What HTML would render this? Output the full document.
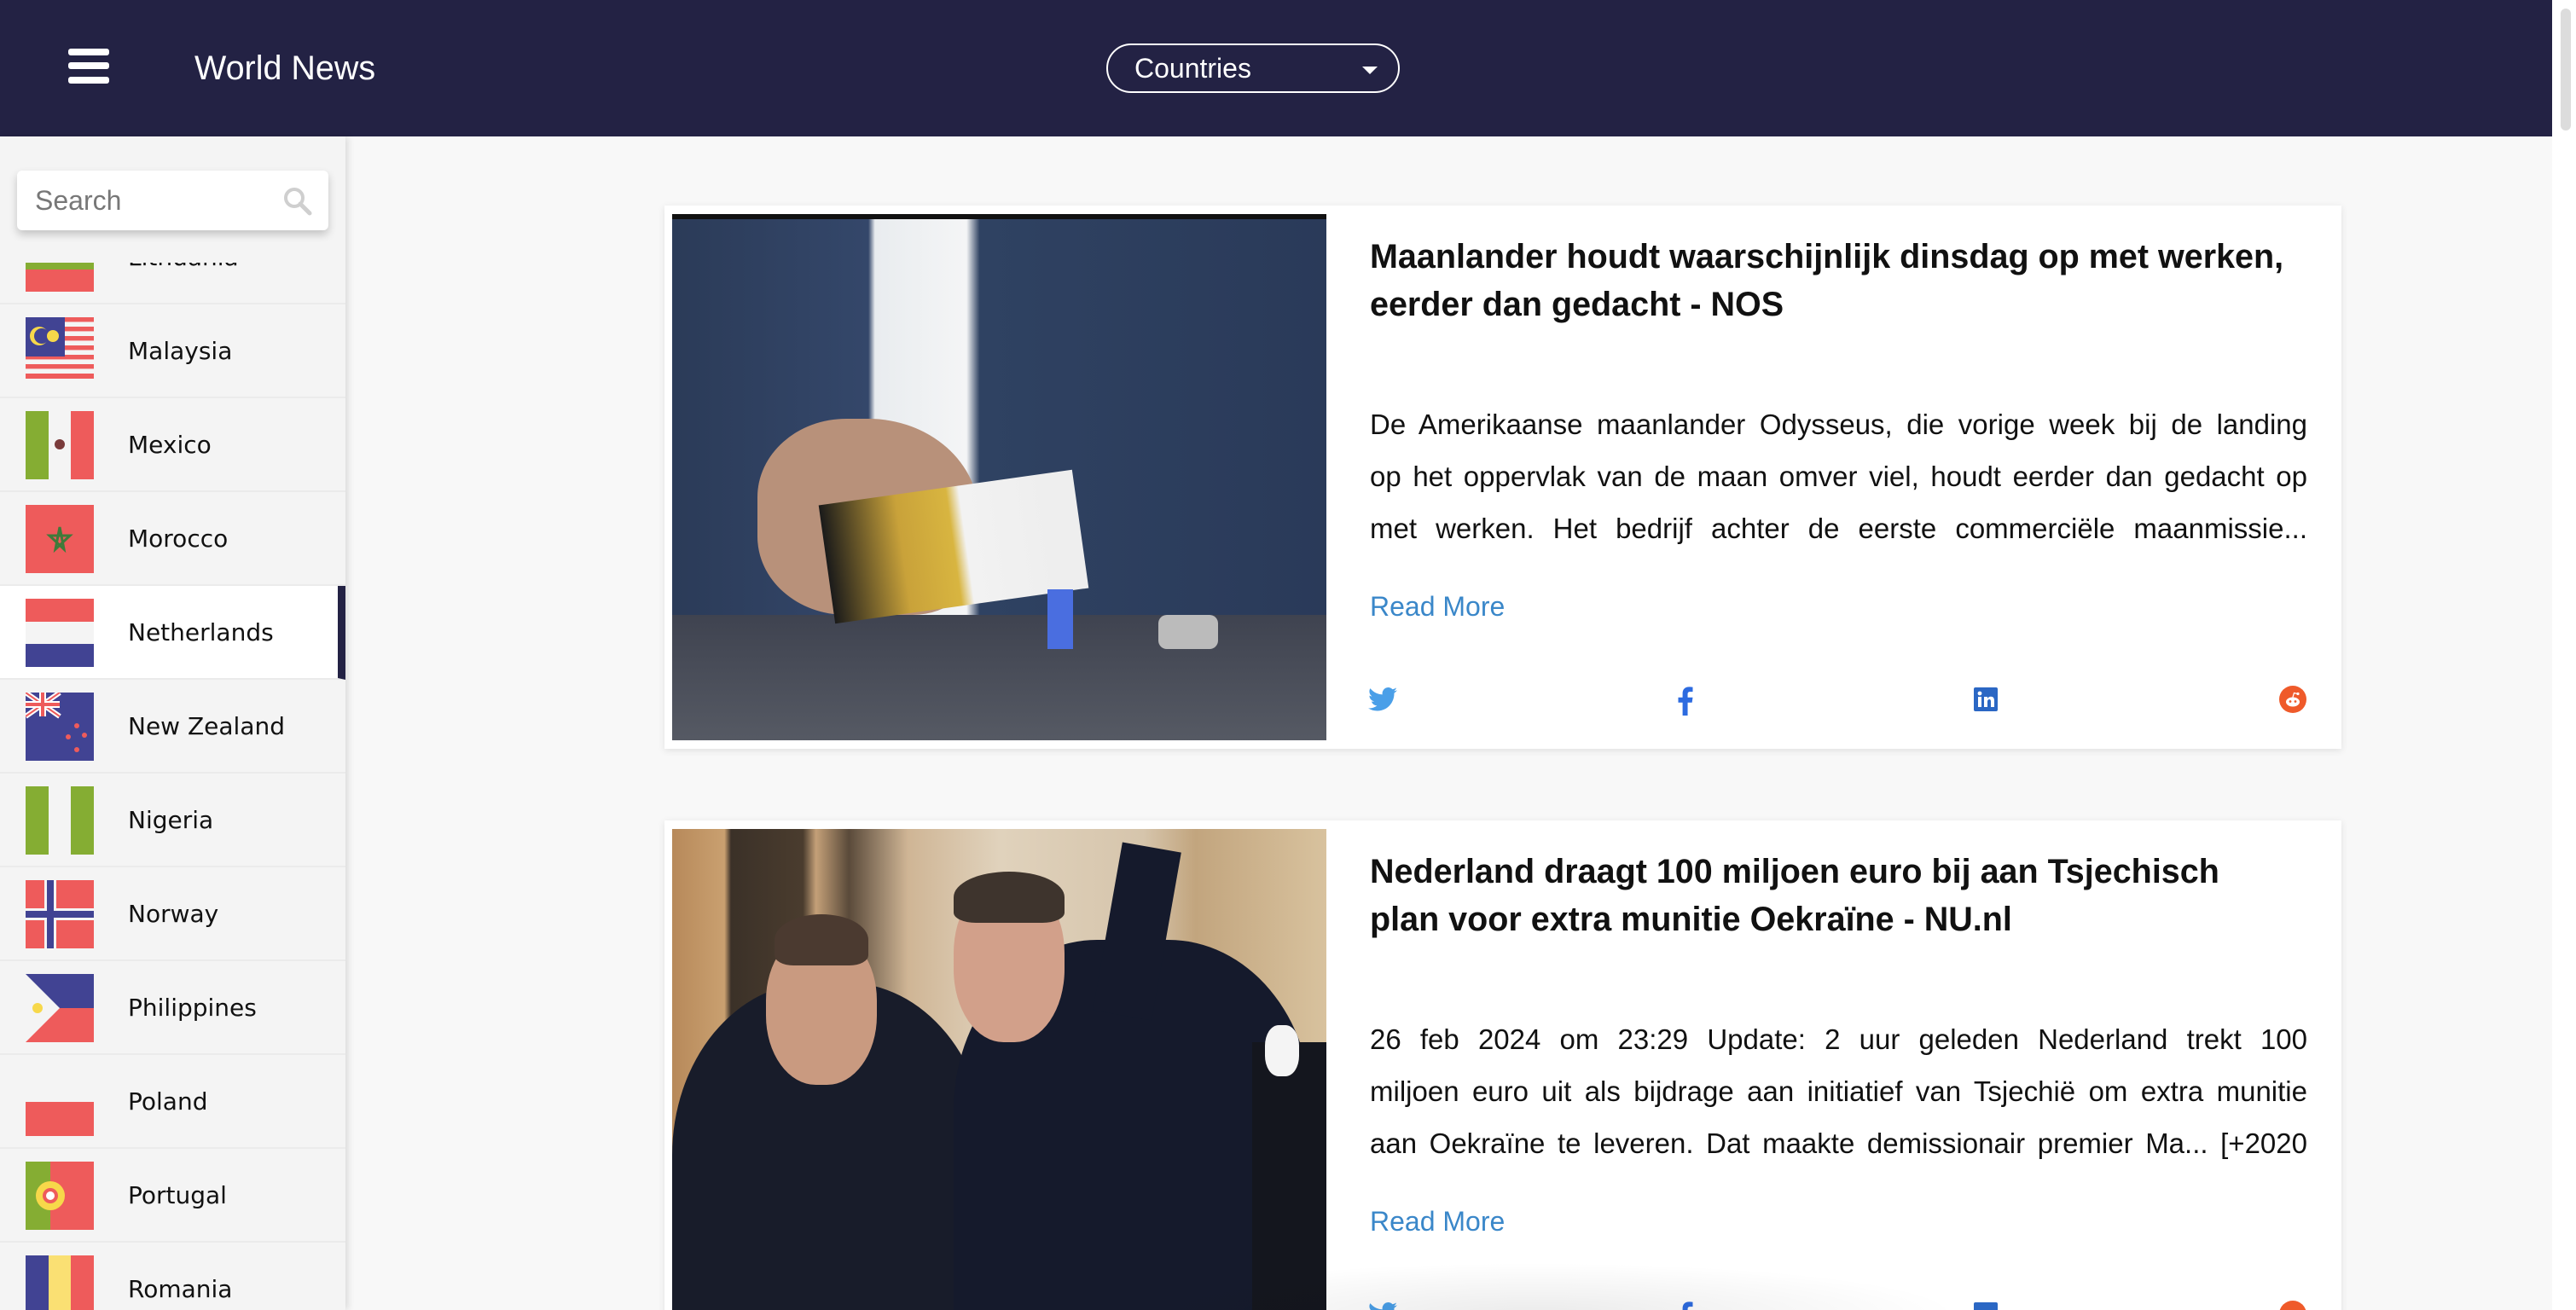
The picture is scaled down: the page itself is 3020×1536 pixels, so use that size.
<!DOCTYPE html>
<html style="width:3020px;height:1536px;overflow:hidden"><head><meta charset="utf-8"><style>
*{margin:0;padding:0;box-sizing:border-box}
body{width:3020px;height:1536px;overflow:hidden;background:#fff;font-family:"Liberation Sans",Arial,sans-serif;position:relative}
#wrap{position:absolute;left:0;top:0;width:3020px;height:1536px;overflow:hidden}
.abs{position:absolute}
#hdr{left:0;top:0;width:2992px;height:160px;background:#232244}
.bar{position:absolute;left:80px;width:48px;height:8px;background:#fff;border-radius:3px}
#main{left:0;top:160px;width:2992px;height:1376px;background:#f8f8f8}
#side{left:0;top:160px;width:405px;height:1376px;background:#f4f4f4;box-shadow:3px 0 8px rgba(0,0,0,.12)}
#list{left:0;top:308px;width:405px;height:1228px;overflow:hidden}
.row{position:absolute;left:0;width:405px;height:110px;border-bottom:2px solid #ebebeb}
.row .nm{position:absolute;left:150px;top:0;line-height:110px;color:#111;font-family:"DejaVu Sans",sans-serif;font-size:28px}
.flag{position:absolute;left:30px;top:15px;width:80px;height:80px;overflow:hidden}
.card{position:absolute;left:779px;width:1966px;height:637px;background:#fff;box-shadow:0 2px 8px rgba(0,0,0,.1)}
.img{position:absolute;left:9px;top:10px;width:767px;height:617px;overflow:hidden}
.tt{position:absolute;left:827px;font-weight:bold;font-size:39.5px;line-height:56px;color:#111}
.bd{position:absolute;left:827px;width:1099px;font-size:33px;line-height:61px;color:#111}
.bd div{text-align:justify;text-align-last:justify;white-space:nowrap;overflow:hidden}
.rm{position:absolute;left:827px;font-size:32px;color:#3a87c9}
.ic{position:absolute}
</style></head><body><div id="wrap">
<div id="hdr" class="abs">
  <div class="bar" style="top:57px"></div><div class="bar" style="top:73px"></div><div class="bar" style="top:90px"></div>
  <div class="abs" style="left:228px;top:57px;font-size:39.5px;color:#fff;line-height:46px">World News</div>
  <div class="abs" style="left:1297px;top:51px;width:344px;height:58px;border:2px solid #fff;border-radius:29px">
    <div class="abs" style="left:31px;top:8px;font-size:32px;color:#fff;line-height:38px">Countries</div>
    <div class="abs" style="left:298px;top:25px;width:0;height:0;border-left:9px solid transparent;border-right:9px solid transparent;border-top:9px solid #fff"></div>
  </div>
</div>
<div class="abs" style="left:2992px;top:0;width:28px;height:1536px;background:#fff"></div>
<div class="abs" style="left:3002px;top:10px;width:12px;height:143px;background:#dcdcdc;border-radius:6px"></div>
<div id="main" class="abs"></div>
<div id="side" class="abs"></div>
<div id="list" class="abs">
 <div class="row" style="top:-61px"><div class="flag"><div style="height:27px;background:#f7d84a"></div><div style="height:27px;background:#85ad33"></div><div style="height:26px;background:#ee5b5b"></div></div><div class="nm">Lithuania</div></div>
 <div class="row" style="top:49px"><div class="flag" style="height:75px">
   <svg width="80" height="75" viewBox="0 0 80 75"><rect width="80" height="75" fill="#f4f4f4"/><g fill="#ee5b5b"><rect y="0" width="80" height="5.4"/><rect y="11" width="80" height="5.4"/><rect y="22" width="80" height="5.4"/><rect y="33" width="80" height="5.4"/><rect y="44" width="80" height="5.4"/><rect y="55" width="80" height="5.4"/><rect y="66" width="80" height="6"/></g><rect width="46" height="46" fill="#414393"/><circle cx="16" cy="22" r="11" fill="#f7d84a"/><circle cx="19" cy="22" r="9" fill="#414393"/><circle cx="32" cy="22" r="7" fill="#f7d84a"/></svg></div><div class="nm">Malaysia</div></div>
 <div class="row" style="top:159px"><div class="flag"><div style="float:left;width:27px;height:80px;background:#85ad33"></div><div style="float:left;width:26px;height:80px;background:#f4f4f4;position:relative"><div style="position:absolute;left:7px;top:33px;width:12px;height:12px;border-radius:50%;background:#7a3b3b"></div></div><div style="float:left;width:27px;height:80px;background:#ee5b5b"></div></div><div class="nm">Mexico</div></div>
 <div class="row" style="top:269px"><div class="flag" style="background:#ee5b5b"><svg width="80" height="80"><polygon points="40,26 45,52 28,36 52,36 35,52" fill="none" stroke="#3f7a3a" stroke-width="3"/></svg></div><div class="nm">Morocco</div></div>
 <div class="row" style="top:379px;background:#fff;border-right:9px solid #232244"><div class="flag"><div style="height:27px;background:#ee5b5b"></div><div style="height:26px;background:#f4f4f4"></div><div style="height:27px;background:#414393"></div></div><div class="nm">Netherlands</div></div>
 <div class="row" style="top:489px"><div class="flag"><svg width="80" height="80"><rect width="80" height="80" fill="#414393"/><path d="M0 0L40 28M40 0L0 28" stroke="#fff" stroke-width="6"/><path d="M0 0L40 28M40 0L0 28" stroke="#ee5b5b" stroke-width="2"/><path d="M20 0V28M0 14H40" stroke="#fff" stroke-width="8"/><path d="M20 0V28M0 14H40" stroke="#ee5b5b" stroke-width="4"/><g fill="#ee5b5b"><circle cx="60" cy="39" r="3"/><circle cx="50" cy="52" r="3"/><circle cx="69" cy="50" r="3"/><circle cx="60" cy="67" r="3"/></g></svg></div><div class="nm">New Zealand</div></div>
 <div class="row" style="top:599px"><div class="flag"><div style="float:left;width:27px;height:80px;background:#85ad33"></div><div style="float:left;width:26px;height:80px;background:#f4f4f4"></div><div style="float:left;width:27px;height:80px;background:#85ad33"></div></div><div class="nm">Nigeria</div></div>
 <div class="row" style="top:709px"><div class="flag"><svg width="80" height="80"><rect width="80" height="80" fill="#ee5b5b"/><path d="M29 0V80M0 40H80" stroke="#f4f4f4" stroke-width="14"/><path d="M29 0V80M0 40H80" stroke="#414393" stroke-width="8"/></svg></div><div class="nm">Norway</div></div>
 <div class="row" style="top:819px"><div class="flag"><svg width="80" height="80"><rect width="80" height="40" fill="#414393"/><rect y="40" width="80" height="40" fill="#ee5b5b"/><polygon points="0,0 40,40 0,80" fill="#f4f4f4"/><circle cx="14" cy="40" r="6" fill="#f7d84a"/></svg></div><div class="nm">Philippines</div></div>
 <div class="row" style="top:929px"><div class="flag"><div style="height:40px;background:#f4f4f4"></div><div style="height:40px;background:#ee5b5b"></div></div><div class="nm">Poland</div></div>
 <div class="row" style="top:1039px"><div class="flag"><svg width="80" height="80"><rect width="80" height="80" fill="#ee5b5b"/><rect width="29" height="80" fill="#85ad33"/><circle cx="29" cy="40" r="17" fill="#f7d84a"/><circle cx="29" cy="40" r="9" fill="#ee5b5b"/><circle cx="29" cy="40" r="5" fill="#fff"/></svg></div><div class="nm">Portugal</div></div>
 <div class="row" style="top:1149px"><div class="flag"><div style="float:left;width:27px;height:80px;background:#414393"></div><div style="float:left;width:26px;height:80px;background:#fae073"></div><div style="float:left;width:27px;height:80px;background:#ee5b5b"></div></div><div class="nm">Romania</div></div>
</div>
<div class="abs" style="left:20px;top:200px;width:365px;height:70px;background:#fff;border-radius:6px;box-shadow:0 5px 10px rgba(0,0,0,.2)">
  <div class="abs" style="left:21px;top:16px;font-size:32px;color:#777;line-height:38px">Search</div>
  <svg class="abs" style="left:312px;top:19px" width="34" height="34" viewBox="0 0 34 34"><circle cx="13" cy="13" r="10" fill="none" stroke="#cfcfcf" stroke-width="4"/><path d="M20 20L31 31" stroke="#cfcfcf" stroke-width="5" stroke-linecap="round"/></svg>
</div>

<div class="card" style="top:241px">
  <div class="img" style="background:linear-gradient(180deg,#111 0,#111 6px,transparent 6px),linear-gradient(90deg,#2b3b58 0,#34476a 30%,#e9ecef 31%,#f4f5f6 45%,#2f4262 47%,#2a3a59 100%)">
    <div class="abs" style="left:0;top:470px;width:767px;height:150px;background:linear-gradient(180deg,#3f4350,#565a64)"></div>
    <div class="abs" style="left:100px;top:240px;width:260px;height:230px;background:#b8917a;border-radius:40% 50% 30% 40%"></div>
    <div class="abs" style="left:180px;top:320px;width:300px;height:140px;background:linear-gradient(90deg,#1a1a1a,#c9a23a 30%,#d8b540 50%,#f2f2f2 55%,#eee 90%);transform:rotate(-8deg)"></div>
    <div class="abs" style="left:440px;top:440px;width:30px;height:70px;background:#4a6ee0"></div>
    <div class="abs" style="left:570px;top:470px;width:70px;height:40px;background:#bbb;border-radius:10px"></div>
  </div>
  <div class="tt" style="top:32px">Maanlander houdt waarschijnlijk dinsdag op met werken,<br>eerder dan gedacht - NOS</div>
  <div class="bd" style="top:226px"><div>De Amerikaanse maanlander Odysseus, die vorige week bij de landing</div><div>op het oppervlak van de maan omver viel, houdt eerder dan gedacht op</div><div>met werken. Het bedrijf achter de eerste commerciële maanmissie...</div></div>
  <div class="rm" style="top:452px">Read More</div>
  <svg class="ic" style="left:825px;top:564px" width="34" height="30" viewBox="0 0 24 20"><path fill="#4a9fe8" d="M24 2.4a9.8 9.8 0 0 1-2.8.8A4.9 4.9 0 0 0 23.3.5a9.9 9.9 0 0 1-3.1 1.2A4.9 4.9 0 0 0 11.8 6 14 14 0 0 1 1.7.9a4.9 4.9 0 0 0 1.5 6.6A4.9 4.9 0 0 1 1 6.9a4.9 4.9 0 0 0 3.9 4.8 4.9 4.9 0 0 1-2.2.1 4.9 4.9 0 0 0 4.6 3.4A9.9 9.9 0 0 1 0 17.3 14 14 0 0 0 7.5 19.5c9 0 14-7.5 14-14v-.6A10 10 0 0 0 24 2.4z"/></svg>
  <svg class="ic" style="left:1188px;top:564px" width="18" height="34" viewBox="0 0 10 20"><path fill="#2d6be0" d="M6.5 20V11h3l.5-3.5H6.5V5.3c0-1 .3-1.7 1.7-1.7H10V.4C9.7.3 8.6.2 7.4.2 4.8.2 3 1.8 3 4.7v2.8H0V11h3v9z"/></svg>
  <svg class="ic" style="left:1535px;top:565px" width="28" height="28" viewBox="0 0 28 28"><rect width="28" height="28" rx="2" fill="#2b67c4"/><rect x="5" y="11" width="4" height="12" fill="#fff"/><circle cx="7" cy="7" r="2.4" fill="#fff"/><path d="M12 11h4v2c.8-1.4 2.2-2.3 4-2.3 3 0 4 2 4 5V23h-4v-6.5c0-1.5-.5-2.5-1.800-2.5S16 15 16 16.5V23h-4z" fill="#fff"/></svg>
  <svg class="ic" style="left:1893px;top:563px" width="32" height="32" viewBox="0 0 32 32"><circle cx="16" cy="16" r="16" fill="#ef5a2a"/><ellipse cx="16" cy="19" rx="8" ry="5.5" fill="#fff"/><circle cx="13" cy="18.5" r="1.4" fill="#ef5a2a"/><circle cx="19" cy="18.5" r="1.4" fill="#ef5a2a"/><path d="M16 13.5l1.5-5 4 1" stroke="#fff" stroke-width="1.3" fill="none"/><circle cx="22" cy="9.5" r="1.6" fill="#fff"/></svg>
</div>

<div class="card" style="top:962px">
  <div class="img" style="background:linear-gradient(90deg,#b7895a 0,#c9a070 8%,#3b3128 9%,#4a3c2e 20%,#c4a078 22%,#5a4a3a 27%,#cfb595 36%,#e0d2bc 50%,#d6c5ac 72%,#c2a57e 80%,#d8c29e 100%)">
    <div class="abs" style="left:0;top:180px;width:370px;height:450px;background:#181c2a;border-radius:45% 45% 0 0"></div>
    <div class="abs" style="left:110px;top:120px;width:130px;height:180px;background:#c99a80;border-radius:45%"></div>
    <div class="abs" style="left:120px;top:100px;width:110px;height:60px;background:#4b3a30;border-radius:50% 50% 20% 20%"></div>
    <div class="abs" style="left:330px;top:130px;width:420px;height:500px;background:#151a2c;border-radius:40% 40% 0 0"></div>
    <div class="abs" style="left:330px;top:60px;width:130px;height:190px;background:#d2a08a;border-radius:45%"></div>
    <div class="abs" style="left:330px;top:50px;width:130px;height:60px;background:#3e342d;border-radius:50% 50% 20% 20%"></div>
    <div class="abs" style="left:510px;top:20px;width:70px;height:200px;background:#151a2c;transform:rotate(10deg)"></div>
    <div class="abs" style="left:680px;top:250px;width:90px;height:380px;background:#14161e"></div>
    <div class="abs" style="left:695px;top:230px;width:40px;height:60px;background:#f4f4f4;border-radius:40%"></div>
  </div>
  <div class="tt" style="top:32px">Nederland draagt 100 miljoen euro bij aan Tsjechisch<br>plan voor extra munitie Oekraïne - NU.nl</div>
  <div class="bd" style="top:226px"><div>26 feb 2024 om 23:29 Update: 2 uur geleden Nederland trekt 100</div><div>miljoen euro uit als bijdrage aan initiatief van Tsjechië om extra munitie</div><div>aan Oekraïne te leveren. Dat maakte demissionair premier Ma... [+2020</div></div>
  <div class="rm" style="top:452px">Read More</div>
  <svg class="ic" style="left:825px;top:564px" width="34" height="30" viewBox="0 0 24 20"><path fill="#4a9fe8" d="M24 2.4a9.8 9.8 0 0 1-2.8.8A4.9 4.9 0 0 0 23.3.5a9.9 9.9 0 0 1-3.1 1.2A4.9 4.9 0 0 0 11.8 6 14 14 0 0 1 1.7.9a4.9 4.9 0 0 0 1.5 6.6A4.9 4.9 0 0 1 1 6.9a4.9 4.9 0 0 0 3.9 4.8 4.9 4.9 0 0 1-2.2.1 4.9 4.9 0 0 0 4.6 3.4A9.9 9.9 0 0 1 0 17.3 14 14 0 0 0 7.5 19.5c9 0 14-7.5 14-14v-.6A10 10 0 0 0 24 2.4z"/></svg>
  <svg class="ic" style="left:1188px;top:564px" width="18" height="34" viewBox="0 0 10 20"><path fill="#2d6be0" d="M6.5 20V11h3l.5-3.5H6.5V5.3c0-1 .3-1.7 1.7-1.7H10V.4C9.7.3 8.6.2 7.4.2 4.8.2 3 1.8 3 4.7v2.8H0V11h3v9z"/></svg>
  <svg class="ic" style="left:1535px;top:565px" width="28" height="28" viewBox="0 0 28 28"><rect width="28" height="28" rx="2" fill="#2b67c4"/></svg>
  <svg class="ic" style="left:1893px;top:563px" width="32" height="32" viewBox="0 0 32 32"><circle cx="16" cy="16" r="16" fill="#ef5a2a"/></svg>
</div>
<div class="abs" style="left:1300px;top:1480px;width:1000px;height:120px;border-radius:50%;background:radial-gradient(ellipse at center,rgba(0,0,0,.08),rgba(0,0,0,0) 70%)"></div>
</div></body></html>
